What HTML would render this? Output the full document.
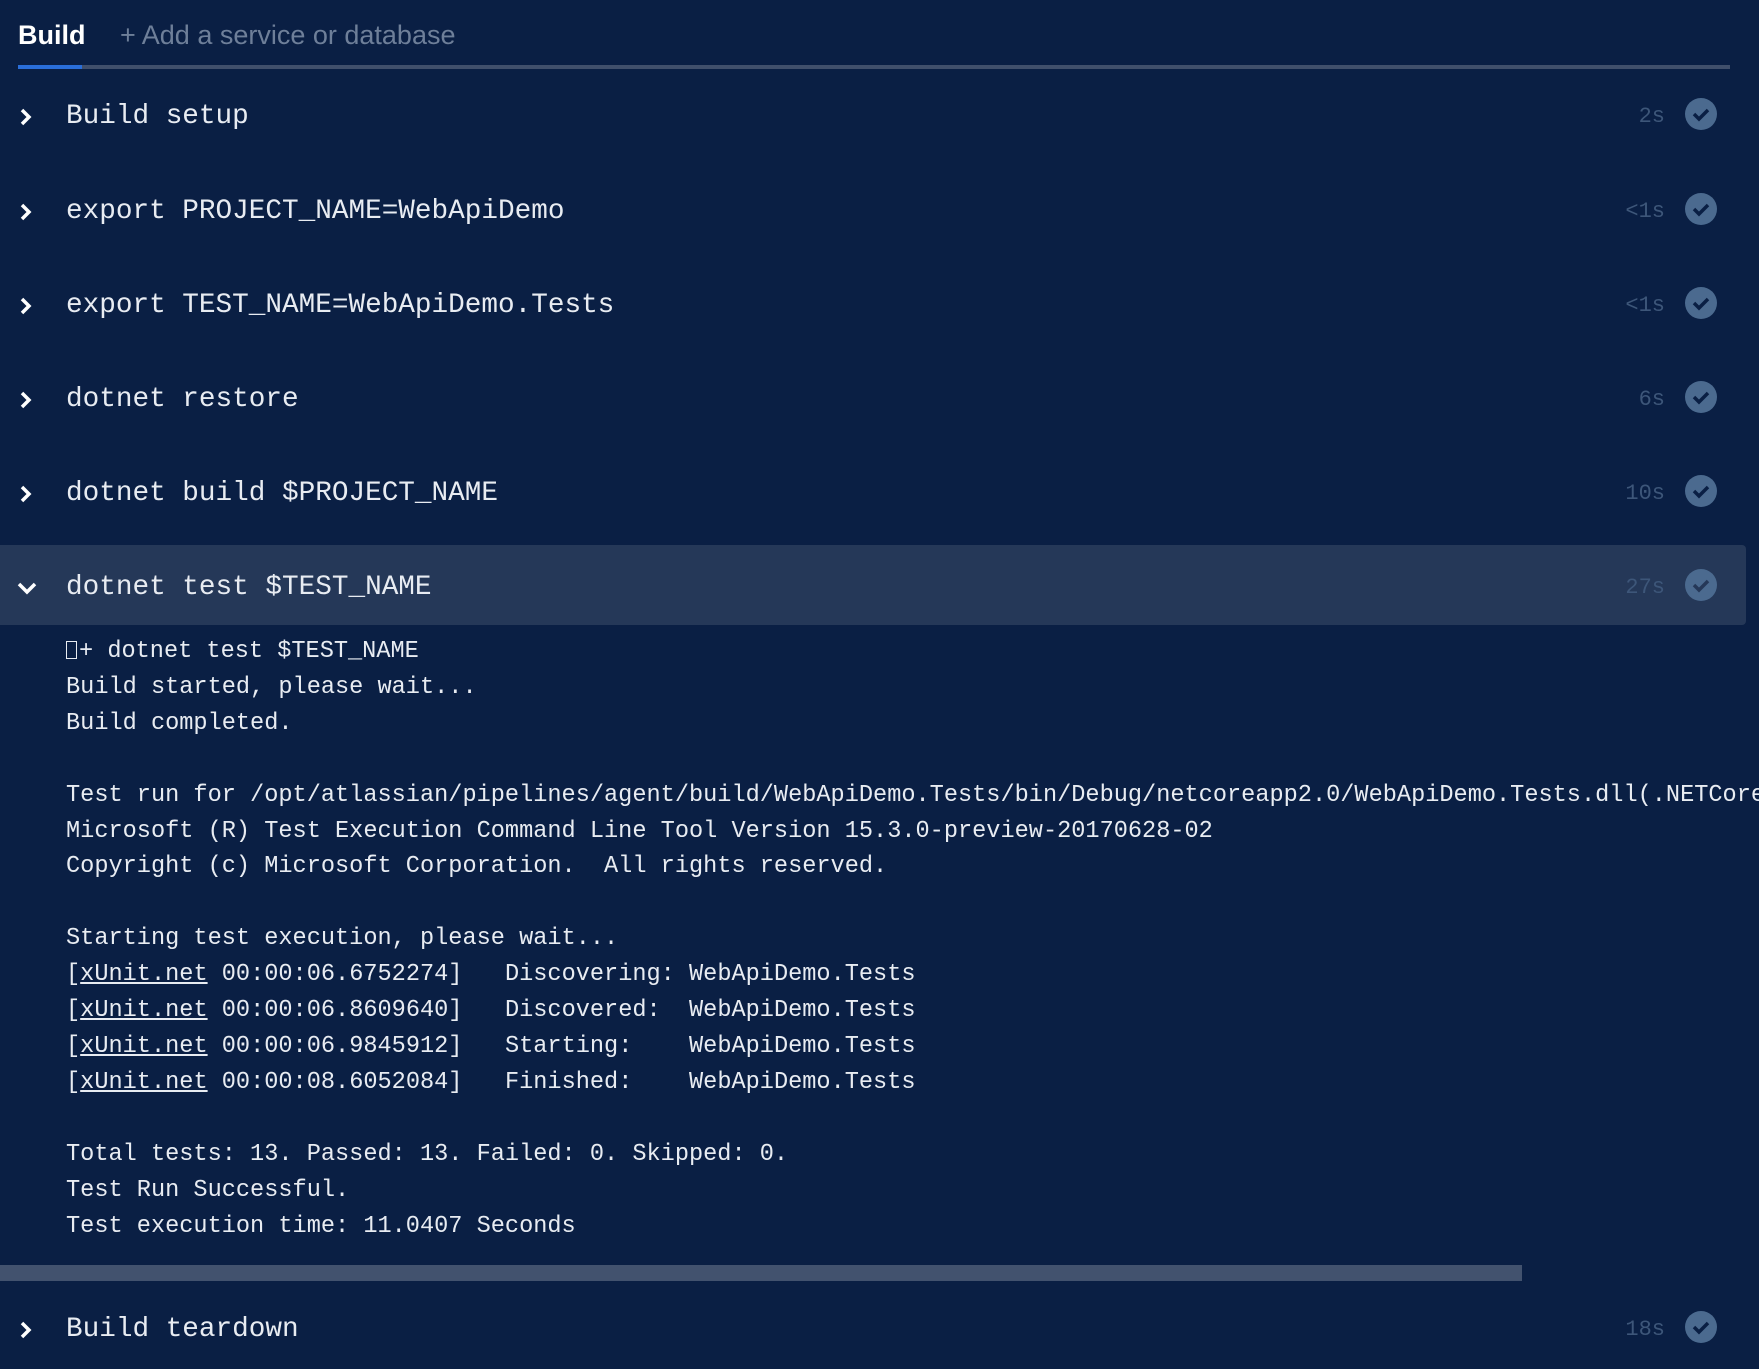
<!DOCTYPE html>
<html><head><meta charset="utf-8"><style>
html,body{margin:0;padding:0}
body{width:1759px;height:1369px;background:#0a1f44;overflow:hidden;position:relative;font-family:"Liberation Mono",monospace;color:#e8ecf2}
.wrap{position:absolute;left:0;top:0;width:1759px;height:1369px;overflow:hidden}
.abs{position:absolute}
.tab{font-family:"Liberation Sans",sans-serif;font-size:27px;top:17px;line-height:36px}
.row{position:absolute;left:0;width:1746px;height:80px}
.row .t{position:absolute;left:66px;top:3px;line-height:80px;font-size:27.7px;white-space:pre}
.row .tm{position:absolute;right:81px;top:3px;line-height:80px;font-size:22px;color:#3d5679}
.row .ck{position:absolute;left:1685px;top:24px;width:32px;height:32px;border-radius:50%;background:#4b6a8f}
.row .chev{position:absolute;left:16px;top:33px}
.log{position:absolute;left:66px;top:634px;width:1693px;overflow:hidden;font-size:23.6px;line-height:35.9px;white-space:pre;color:#e8ecf2}
.log u{text-decoration:underline}
.box{display:inline-block;width:11px;height:18px;border:1.5px solid #e8ecf2;vertical-align:-2px;box-sizing:border-box;margin-right:2px}
</style></head><body><div class="wrap">
<div class="abs tab" style="left:18px;font-weight:bold;color:#fff">Build</div>
<div class="abs tab" style="left:120px;color:#6e7f99">+ Add a service or database</div>
<div class="abs" style="left:18px;top:65px;width:1712px;height:4px;background:#404f6b"></div>
<div class="abs" style="left:18px;top:65px;width:64px;height:4px;background:#2a6ed9"></div>

<div class="row" style="top:74px"><svg class="chev" width="20" height="20" viewBox="0 0 20 20"><path d="M6 3l7 7-7 7" fill="none" stroke="#fff" stroke-width="3.5"/></svg><div class="t">Build setup</div><div class="tm">2s</div><div class="ck"><svg width="32" height="32"><path d="M9 16l5 5 9-9" fill="none" stroke="#0a1f44" stroke-width="3.5"/></svg></div></div>
<div class="row" style="top:169px"><svg class="chev" width="20" height="20" viewBox="0 0 20 20"><path d="M6 3l7 7-7 7" fill="none" stroke="#fff" stroke-width="3.5"/></svg><div class="t">export PROJECT_NAME=WebApiDemo</div><div class="tm">&lt;1s</div><div class="ck"><svg width="32" height="32"><path d="M9 16l5 5 9-9" fill="none" stroke="#0a1f44" stroke-width="3.5"/></svg></div></div>
<div class="row" style="top:263px"><svg class="chev" width="20" height="20" viewBox="0 0 20 20"><path d="M6 3l7 7-7 7" fill="none" stroke="#fff" stroke-width="3.5"/></svg><div class="t">export TEST_NAME=WebApiDemo.Tests</div><div class="tm">&lt;1s</div><div class="ck"><svg width="32" height="32"><path d="M9 16l5 5 9-9" fill="none" stroke="#0a1f44" stroke-width="3.5"/></svg></div></div>
<div class="row" style="top:357px"><svg class="chev" width="20" height="20" viewBox="0 0 20 20"><path d="M6 3l7 7-7 7" fill="none" stroke="#fff" stroke-width="3.5"/></svg><div class="t">dotnet restore</div><div class="tm">6s</div><div class="ck"><svg width="32" height="32"><path d="M9 16l5 5 9-9" fill="none" stroke="#0a1f44" stroke-width="3.5"/></svg></div></div>
<div class="row" style="top:451px"><svg class="chev" width="20" height="20" viewBox="0 0 20 20"><path d="M6 3l7 7-7 7" fill="none" stroke="#fff" stroke-width="3.5"/></svg><div class="t">dotnet build $PROJECT_NAME</div><div class="tm">10s</div><div class="ck"><svg width="32" height="32"><path d="M9 16l5 5 9-9" fill="none" stroke="#0a1f44" stroke-width="3.5"/></svg></div></div>
<div class="row" style="top:545px;background:#253858;border-radius:0 4px 4px 0"><svg class="chev" width="22" height="20" viewBox="0 0 22 20" style="left:16px;top:34px"><path d="M3 5l8 8 8-8" fill="none" stroke="#fff" stroke-width="3.5"/></svg><div class="t">dotnet test $TEST_NAME</div><div class="tm">27s</div><div class="ck"><svg width="32" height="32"><path d="M9 16l5 5 9-9" fill="none" stroke="#253858" stroke-width="3.5"/></svg></div></div>

<div class="log"><span class="box"></span>+ dotnet test $TEST_NAME
Build started, please wait...
Build completed.

Test run for /opt/atlassian/pipelines/agent/build/WebApiDemo.Tests/bin/Debug/netcoreapp2.0/WebApiDemo.Tests.dll(.NETCoreApp,Version=v2.0)
Microsoft (R) Test Execution Command Line Tool Version 15.3.0-preview-20170628-02
Copyright (c) Microsoft Corporation.  All rights reserved.

Starting test execution, please wait...
[<u>xUnit.net</u> 00:00:06.6752274]   Discovering: WebApiDemo.Tests
[<u>xUnit.net</u> 00:00:06.8609640]   Discovered:  WebApiDemo.Tests
[<u>xUnit.net</u> 00:00:06.9845912]   Starting:    WebApiDemo.Tests
[<u>xUnit.net</u> 00:00:08.6052084]   Finished:    WebApiDemo.Tests

Total tests: 13. Passed: 13. Failed: 0. Skipped: 0.
Test Run Successful.
Test execution time: 11.0407 Seconds</div>

<div class="abs" style="left:0;top:1265px;width:1522px;height:16px;background:#42526e"></div>

<div class="row" style="top:1287px"><svg class="chev" width="20" height="20" viewBox="0 0 20 20"><path d="M6 3l7 7-7 7" fill="none" stroke="#fff" stroke-width="3.5"/></svg><div class="t">Build teardown</div><div class="tm">18s</div><div class="ck"><svg width="32" height="32"><path d="M9 16l5 5 9-9" fill="none" stroke="#0a1f44" stroke-width="3.5"/></svg></div></div>
</div></body></html>
